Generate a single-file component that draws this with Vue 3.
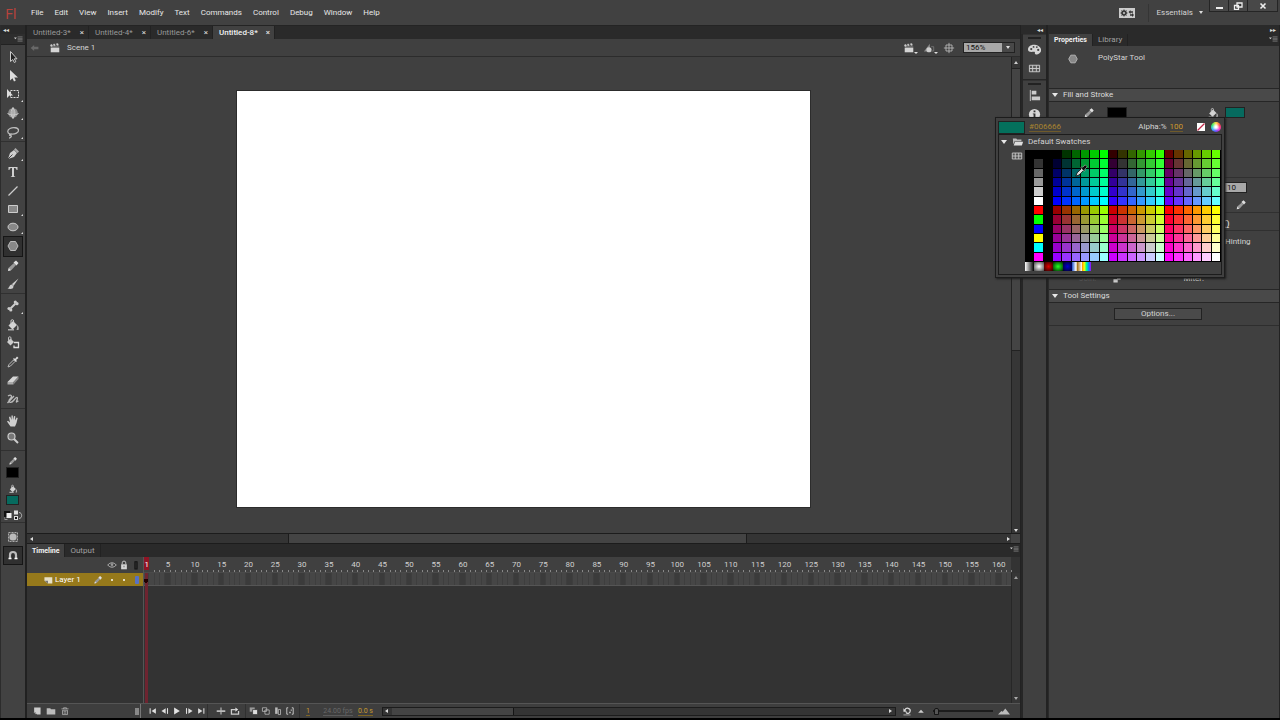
<script setup>
import { ref } from 'vue'

const menus = ['File', 'Edit', 'View', 'Insert', 'Modify', 'Text', 'Commands', 'Control', 'Debug', 'Window', 'Help']
const docs = ['Untitled-3*', 'Untitled-4*', 'Untitled-6*', 'Untitled-8*']
const activeDoc = ref('Untitled-8*')
const activeTool = ref('polystar')
const zoomLevel = ref('156%')
const strokeHeight = ref('10')
const timelineZoom = ref(2)

const toolGroups = [
  { cls: 'g1', tools: [['select', 0], ['subselect', 0], ['transform', 1], ['rotate3d', 1], ['lasso', 1]] },
  { cls: 'g2', tools: [['pen', 1], ['text', 0], ['line', 0], ['rect', 1], ['oval', 1], ['polystar', 0], ['pencil', 0], ['brush', 0]] },
  { cls: 'g3', tools: [['bone', 1], ['bucket', 0], ['ink', 0], ['dropper', 0], ['eraser', 0], ['width', 0]] },
  { cls: 'g4', tools: [['hand', 0], ['zoom', 0]] }
]

const frames = Array.from({ length: 162 }, (_, i) => i + 1)
const label = n => (n === 1 || (n % 5 === 0 && n <= 160) ? n : '')

const greys = ['#000', '#333', '#666', '#999', '#ccc', '#fff', '#f00', '#0f0', '#00f', '#ff0', '#0ff', '#f0f']
const swatches = []
for (let r = 0; r < 12; r++) {
  for (let c = 0; c < 21; c++) {
    if (c === 1) swatches.push(greys[r])
    else if (c < 3) swatches.push('#000')
    else {
      const k = c - 3
      const red = 51 * (Math.floor(k / 6) + (r > 5 ? 3 : 0))
      swatches.push(`rgb(${red},${51 * (k % 6)},${51 * (r % 6)})`)
    }
  }
}

const bucket = '<path d="M2.500 7.500L7 3l4 4-4.500 4.500z" fill="#d4d4d4"/><path d="M5 6V3a1.300 1.300 0 0 1 2.600 0v3" fill="none" stroke="#ccc"/><path d="M11 7c2 1 2 3 1.500 5h-2c1-2 .5-3.500.5-5zM2 11h6v1.500H2z" fill="#aaa"/>'
const icons = {
  select: '<path d="M4.500 1.500v10l2.300-2 1.500 3 1.500-.8-1.500-2.900h2.700z" fill="#222" stroke="#ccc"/>',
  subselect: '<path d="M4 1v10.500l2.500-2.200 1.500 3.200 1.800-.9-1.500-3H12z" fill="#ddd"/>',
  transform: '<path d="M1 2v9l2.500-2.500H7z" fill="#ddd"/><path d="M4.500 3.500h8v7h-8z" fill="none" stroke="#ddd" stroke-dasharray="2 1"/>',
  rotate3d: '<circle cx="7" cy="7" r="4.800" fill="#909090"/><path d="M7 1v12M1.500 7.500c3 2 8 2 11 0M7 2C4.500 4 4.500 10 7 12M7 2c2.500 3 2.500 7 0 10" fill="none" stroke="#ccc"/>',
  lasso: '<path d="M4 9C1 8 1 5 4 3.500s8-1 8.500 1.500S9 9.500 5 9c-2 0-2 2 0 1.500 1 1-.5 2.500-2 2.500" fill="none" stroke="#bbb" stroke-width="1.300"/>',
  pen: '<path d="M2 12l2-6 4-3 3 3-3 4z" fill="#d0d0d0"/><path d="M8 2.500L9.500 1l3.500 3.500L11.500 6z" fill="#aaa"/><path d="M2 12l4.500-4.500" stroke="#444"/>',
  text: '<path d="M2.500 2h9v3h-1c0-1.200-.5-2-2-2H8v8l1.500 1H4.500L6 11V3h-.5c-1.500 0-2 .8-2 2h-1z" fill="#d0d0d0"/>',
  line: '<path d="M2.500 11.500l9-9" stroke="#ccc" stroke-width="1.300"/>',
  rect: '<path d="M2.500 3.500h9v7h-9z" fill="#888" stroke="#ccc"/>',
  oval: '<ellipse cx="7" cy="7" rx="5" ry="3.800" fill="#888" stroke="#ccc"/>',
  polystar: '<path d="M4.500 2.500h5L12 7l-2.500 4.500h-5L2 7z" fill="#888" stroke="#bbb"/>',
  pencil: '<path d="M2 12l1-3.500L8 4l2 2-4.500 5z" fill="#999"/><path d="M7.500 3.500L10 1.500 12.500 4l-2 2.500zM2 12l.7-3 2.300 2.300z" fill="#e0e0e0"/>',
  brush: '<path d="M12.500 1.500L6 7l1.500 2zM6 7.500c-3 0-2 3-4.500 4 3 1 6 .5 6-2z" fill="#ccc"/>',
  bone: '<path d="M4.500 9.500l5-5" stroke="#ccc" stroke-width="2"/><circle cx="3" cy="9.500" r="1.600" fill="#ccc"/><circle cx="4.800" cy="11" r="1.600" fill="#ccc"/><circle cx="9.300" cy="3" r="1.600" fill="#ccc"/><circle cx="11" cy="4.700" r="1.600" fill="#ccc"/>',
  bucket,
  ink: '<path d="M1 6l3.500-3.500L8 6 4.500 9.500z" fill="#ccc"/><path d="M2.500 5V2a1 1 0 0 1 2.500 0v3" fill="none" stroke="#bbb"/><path d="M8 6.500h4.500v5H8V9.500" fill="none" stroke="#ddd" stroke-width="1.300"/>',
  dropper: '<path d="M2 12l1-2.500L7.500 5 9 6.500 4.500 11z" fill="none" stroke="#bbb"/><path d="M7 4l1-1 1 1 2-2.500 1.500 1.500L10 5l1 1-1 1z" fill="#ddd"/>',
  eraser: '<path d="M1.500 9L7 3.500h5.500L7.500 9z" fill="#d6d6d6"/><path d="M1.500 9h6v2.500h-6z" fill="#aaa"/><path d="M7.500 9l5-5.500V6l-5 5.500z" fill="#888"/>',
  width: '<path d="M2 4c3-2 5 0 2 3s1 5 4 1 4-3 3 0-1 2 1.500 1M1.500 11L8 4" fill="none" stroke="#bbb" stroke-width="1.300"/>',
  hand: '<path d="M4.500 12.500L1 7.500l1-.8 2 1.800L3 3l1.200-.4L5.500 6V1.500h1.300L7 6l1-4 1.300.3L9 6.500l1.700-3 1 .5-1.200 5-1.500 3.500z" fill="#d0d0d0"/>',
  zoom: '<circle cx="5.500" cy="5.500" r="3.500" fill="#777" stroke="#ccc" stroke-width="1.200"/><path d="M8 8l4 4" stroke="#ccc" stroke-width="2"/>',
  swap: '<path d="M1 2h6v6H1z" fill="#111"/><path d="M3.500 4h5v5h-5z" fill="#eee"/><path d="M1.500 9.500v-1M1.500 10.500h3" fill="none" stroke="#999"/><path d="M11 1.500h4v4h-4zM11 7h4v4h-4z" fill="#ddd"/><path d="M12 8h2v2h-2z" fill="#111"/><path d="M16 3.500c3.500 0 3.500 6 0 6" fill="none" stroke="#bbb"/>',
  objdraw: '<path d="M2.500 2.500h9v9h-9z" fill="#555" stroke="#aaa" stroke-dasharray="2 1"/><circle cx="7" cy="7" r="3.600" fill="#bbb"/>',
  magnet: '<path d="M4 10.500V7a3 3 0 0 1 6 0v3.500" fill="none" stroke="#bbb" stroke-width="2.200"/><path d="M2.500 10.500h3M8.500 10.500h3" stroke="#fff" stroke-width="1.500"/>',
  clap: '<path d="M2 6.500h10V12H2z" fill="#d4d4d4"/><path d="M1.500 3.500l1.800-.8 1 2-2 .8zM5 2.500l1.600-.3.8 2-1.800.4zM8.500 2l2-.2.5 2-1.800.2zM3 5.500h9" fill="#ccc" stroke="#ccc" stroke-width=".4"/>',
  back: '<path d="M2 7l4-3.500v2h5v3H6v2z" fill="#686868"/>',
  symbols: '<path d="M1 11l7-9v9z" fill="#888"/><circle cx="7" cy="9" r="3" fill="#ccc"/><path d="M9.500 5.500h3v5h-3" fill="none" stroke="#777"/>',
  center: '<path d="M7 1v12M1 7h12M3.500 3.500h7v7h-7z" fill="none" stroke="#bbb"/>',
  palette: '<path d="M0 7c0-3 3-5.500 7.500-5S15 6 14 9s-4.500 4-6 3 .5-2.500-1.500-2.500S0 10.500 0 7z" fill="#d6d6d6"/><circle cx="3.500" cy="6.500" r="1.200" fill="#444"/><circle cx="6" cy="4.200" r="1" fill="#444"/><circle cx="9.500" cy="4.400" r="1" fill="#444"/><circle cx="11" cy="7.500" r="1.200" fill="#444"/>',
  gridic: '<path d="M1.500 3.500h11v7h-11zM1.500 7h11M5 3.500v7M9 3.500v7" fill="#555" stroke="#ccc"/>',
  align: '<path d="M2.500 1v12" stroke="#ccc"/><path d="M4 2h5v4H4zM4 8h9v4H4z" fill="#ccc"/>',
  info: '<circle cx="7" cy="7" r="6" fill="#d8d8d8"/><path d="M6 2.800h2v1.700H6zM5.200 5.800H8v4h1v1H5.200v-1H6V6.700h-.8z" fill="#333"/>',
  folder: '<path d="M1 3h4l1 1.200h5V6H3L1.500 10z" fill="#bbb"/><path d="M3.500 6.700H13L11.500 11H2z" fill="#ddd"/>',
  eye: '<path d="M1 7c3-4 9-4 12 0-3 4-9 4-12 0z" fill="none" stroke="#bbb" stroke-width="1.300"/><circle cx="7" cy="6.500" r="1.800" fill="#999"/>',
  lock: '<path d="M3 6h8v7H3z" fill="#d4d4d4"/><path d="M4.500 6V4a2.500 2.500 0 0 1 5 0v2" fill="none" stroke="#ccc" stroke-width="1.300"/><path d="M6.500 8h1v2h-1z" fill="#444"/>',
  outline: '<path d="M5.500 2.500h3v10h-3z" fill="#333" stroke="#111" stroke-width="1.500"/>',
  page: '<path d="M2 3h11v9H7L2 8z" fill="#e6e0c8"/><path d="M2 8h5v4z" fill="#777"/>',
  newlayer: '<path d="M3 2h9v10H7L3 8z" fill="#ccc"/><path d="M2 8.500h3.500V12z" fill="#999"/>',
  newfolder: '<path d="M1 3h5l1 1.500h6V12H1z" fill="#bbb"/>',
  trash: '<path d="M3.500 6h7v6h-7zM2 4h10M5 4V2.500h4V4M5 8h4M5 10h4" fill="none" stroke="#bbb"/>',
  first: '<path d="M3 3v8" stroke="#ddd" stroke-width="1.500"/><path d="M11 3v8L5 7z" fill="#ddd"/>',
  prev: '<path d="M8 3v8L2 7z" fill="#ddd"/><path d="M10.500 3v8" stroke="#ddd" stroke-width="1.500"/>',
  play: '<path d="M3 2v10l8-5z" fill="#e4e4e4"/>',
  next: '<path d="M3.500 3v8" stroke="#ddd" stroke-width="1.500"/><path d="M6 3v8l6-4z" fill="#ddd"/>',
  last: '<path d="M3 3v8l6-4z" fill="#ddd"/><path d="M11 3v8" stroke="#ddd" stroke-width="1.500"/>',
  centerframe: '<path d="M1 6h12v2.500H1zM6.200 2h1.600v10H6.200z" fill="#bbb"/>',
  loop: '<path d="M2 6v5.500h10V7M2 11.500V5h6" fill="none" stroke="#ccc" stroke-width="1.800"/><path d="M7.500 2l4 3-4 3z" fill="#ddd"/>',
  onion: '<path d="M1 2h7v6H1z" fill="#999"/><path d="M5 5h7v7H5z" fill="#ddd" stroke="#333"/>',
  onionout: '<path d="M2 2.500h6v5H2zM5.500 5.500h6v6h-6z" fill="#333" stroke="#ccc"/>',
  multi: '<path d="M3 2h3.500v9H3z" fill="#bbb"/><path d="M7.500 5h3v7h-3z" fill="#333" stroke="#ccc"/>',
  markers: '<path d="M4.500 2.500h-2v9h2M9.500 2.500h2v9h-2" fill="none" stroke="#ccc" stroke-width="1.300"/><path d="M6 8h2v2H6zM8 5h1.500v1.500H8z" fill="#ccc"/>',
  undo: '<path d="M4 5.500C6 1.500 12 3 11.500 7S7 11 5.500 9" fill="none" stroke="#ddd" stroke-width="1.700"/><path d="M2 3v5h5z" fill="#ddd"/><path d="M2 12.500h10" stroke="#ccc"/>',
  hill: '<path d="M2 10l5-5 5 5z" fill="#ccc"/>',
  hills: '<path d="M0 11l4-4 1.500 1L8.500 4 14 11z" fill="#bbb"/>',
  picker: '<path d="M1 15l1.500-4L8 5.500 10.500 8 5 13.500z" fill="#ddd" stroke="#111"/><path d="M7 4.500L8.500 3.500l1 .5L12.500 1 15 3.500 12 6.500l.5 1-1 1.500z" fill="#0a0a0a" stroke="#ddd" stroke-width=".6"/>',
  ws: '<path d="M1 0h16v10H1z" fill="#ccc"/><circle cx="6" cy="5" r="2" fill="none" stroke="#333" stroke-width="1.500"/><path d="M6 1.500v7M2.500 5h7M3.500 2.500l5 5M8.500 2.500l-5 5" stroke="#333" stroke-width=".9"/><circle cx="6" cy="5" r="1" fill="#ccc"/><path d="M10.500 4l2-2v1.300H15v1.400h-2.500V6zM16 7l-2 2V7.700h-2V6.300h2V5z" fill="#333"/>',
  panelmenu: '<path d="M0 5h4L2 7.500z" fill="#ccc"/><path d="M5 4h7M5 6h7M5 8h7M5 10h7" stroke="#888"/>'
}
const transport = ['first', 'prev', 'play', 'next', 'last']
</script>

<template>
  <div class="app">
    <header class="menubar">
      <span class="logo">Fl</span>
      <nav class="menus"><button v-for="m in menus" :key="m">{{ m }}</button></nav>
      <button class="wsicon" aria-label="Sync settings"><svg viewBox="0 0 18 10" v-html="icons.ws" /></button>
      <button class="workspace">Essentials <i class="down" /></button>
      <div class="winctl">
        <button aria-label="Minimize"><svg viewBox="0 0 10 8"><path d="M2 6h7" stroke="#eee" stroke-width="2" /></svg></button>
        <button aria-label="Restore"><svg viewBox="0 0 10 8"><path d="M4 1h5v4H4zM1.500 3.500h4v4h-4z" fill="#333" stroke="#eee" stroke-width="1.300" /></svg></button>
        <button aria-label="Close" class="close"><svg viewBox="0 0 10 8"><path d="M2.500 1.500l5 5M7.500 1.500l-5 5" stroke="#eee" stroke-width="1.600" /></svg></button>
      </div>
    </header>

    <div class="body">
      <aside class="tools">
        <div class="colhead">◂◂</div>
        <div class="toolhead"><svg viewBox="0 0 14 14" class="i10" v-html="icons.panelmenu" /></div>
        <div v-for="g in toolGroups" :key="g.cls" class="group" :class="g.cls">
          <button v-for="[t, more] in g.tools" :key="t" class="tool" :class="{ on: activeTool === t, more }" :aria-label="t" @click="activeTool = t">
            <svg viewBox="0 0 14 14" v-html="icons[t]" />
          </button>
        </div>
        <div class="group colors">
          <svg viewBox="0 0 14 14" class="i10" v-html="icons.pencil" />
          <button class="chip black" aria-label="Stroke color" />
          <svg viewBox="0 0 14 14" class="i10 fillic" v-html="icons.bucket" />
          <button class="chip" aria-label="Fill color" />
          <svg viewBox="0 0 20 13" class="swap" v-html="icons.swap" />
        </div>
        <div class="group opts">
          <button class="tool" aria-label="Object drawing"><svg viewBox="0 0 14 14" v-html="icons.objdraw" /></button>
          <button class="tool on" aria-label="Snap"><svg viewBox="0 0 14 14" v-html="icons.magnet" /></button>
        </div>
      </aside>

      <main class="center">
        <div class="doctabs">
          <div v-for="d in docs" :key="d" class="doctab" :class="{ on: d === activeDoc }">
            <button @click="activeDoc = d">{{ d }}</button><button class="x" aria-label="Close tab">×</button>
          </div>
        </div>
        <div class="editbar">
          <svg viewBox="0 0 14 14" class="i12" v-html="icons.back" />
          <svg viewBox="0 0 14 14" class="i12 scene" v-html="icons.clap" />
          <span>Scene 1</span>
          <div class="editright">
            <button class="dd" aria-label="Edit scene"><svg viewBox="0 0 14 14" class="i12" v-html="icons.clap" /></button>
            <button class="dd" aria-label="Edit symbols"><svg viewBox="0 0 14 14" class="i12" v-html="icons.symbols" /></button>
            <button aria-label="Center stage"><svg viewBox="0 0 14 14" class="i12" v-html="icons.center" /></button>
            <div class="zoom"><input v-model="zoomLevel" aria-label="Zoom"><button aria-label="Zoom levels"><i class="down" /></button></div>
          </div>
        </div>
        <div class="stagewrap">
          <div class="stage"><div class="canvas" /></div>
          <div class="vbar"><i class="up" /><div class="vthumb" /><i class="down" /></div>
        </div>
        <div class="hbar"><i class="left" /><div class="track"><div class="hthumb" /></div><i class="right" /><span class="corner" /></div>

        <section class="timeline">
          <div class="tltabs"><button class="on">Timeline</button><button>Output</button><svg viewBox="0 0 14 14" class="i10 end" v-html="icons.panelmenu" /></div>
          <div class="tlmain">
            <div class="layers">
              <div class="lhead">
                <svg viewBox="0 0 14 14" class="i10" v-html="icons.eye" />
                <svg viewBox="0 0 14 14" class="i10" v-html="icons.lock" />
                <svg viewBox="0 0 14 14" class="i10" v-html="icons.outline" />
              </div>
              <div class="layer">
                <svg viewBox="0 0 14 14" class="i10" v-html="icons.page" />
                <span class="lname">Layer 1</span>
                <svg viewBox="0 0 14 14" class="i10 lpen" v-html="icons.pencil" />
                <span class="dot" /><span class="dot" /><span class="bluebox" />
              </div>
            </div>
            <div class="frames">
              <div class="playhead" />
              <div class="ruler"><span v-for="n in frames" :key="n" :class="{ cur: n === 1 }">{{ label(n) }}</span></div>
              <div class="cells"><span v-for="n in frames" :key="n" :class="{ fifth: n % 5 === 0, key: n === 1 }" /></div>
            </div>
            <div class="tlbar"><i class="up" /><i class="down" /></div>
          </div>
          <div class="tlfoot">
            <div class="lbtns">
              <button aria-label="New layer"><svg viewBox="0 0 14 14" class="i10" v-html="icons.newlayer" /></button>
              <button aria-label="New folder"><svg viewBox="0 0 14 14" class="i10" v-html="icons.newfolder" /></button>
              <button aria-label="Delete"><svg viewBox="0 0 14 14" class="i10" v-html="icons.trash" /></button>
              <span class="grip" />
            </div>
            <div class="tp">
              <button v-for="t in transport" :key="t" :aria-label="t"><svg viewBox="0 0 14 14" class="i10" v-html="icons[t]" /></button>
            </div>
            <div class="tp two">
              <button aria-label="Center frame"><svg viewBox="0 0 14 14" class="i10" v-html="icons.centerframe" /></button>
              <button aria-label="Loop"><svg viewBox="0 0 14 14" class="i10" v-html="icons.loop" /></button>
            </div>
            <div class="tp four">
              <button v-for="t in ['onion', 'onionout', 'multi', 'markers']" :key="t" :aria-label="t"><svg viewBox="0 0 14 14" class="i10" v-html="icons[t]" /></button>
            </div>
            <div class="nums"><span class="num">1</span><span class="num dim">24.00 fps</span><span class="num">0.0 s</span></div>
            <div class="fbar"><i class="left" /><div class="fthumb" /><i class="right" /></div>
            <button class="reset" aria-label="Reset timeline zoom"><svg viewBox="0 0 14 14" class="i10" v-html="icons.undo" /></button>
            <svg viewBox="0 0 14 14" class="i8" v-html="icons.hill" />
            <input v-model="timelineZoom" type="range" min="0" max="100" aria-label="Timeline zoom">
            <svg viewBox="0 0 14 14" class="i12" v-html="icons.hills" />
          </div>
        </section>
      </main>

      <aside class="dock">
        <div class="colhead r">◂◂</div>
        <div class="dgroup">
          <button aria-label="Color"><svg viewBox="0 0 14 14" v-html="icons.palette" /></button>
          <button aria-label="Swatches"><svg viewBox="0 0 14 14" v-html="icons.gridic" /></button>
        </div>
        <div class="dgroup last">
          <button aria-label="Align"><svg viewBox="0 0 14 14" v-html="icons.align" /></button>
          <button aria-label="Info"><svg viewBox="0 0 14 14" v-html="icons.info" /></button>
        </div>
      </aside>

      <aside class="props">
        <div class="colhead r">▸▸</div>
        <div class="ptabs"><button class="on">Properties</button><button>Library</button><svg viewBox="0 0 14 14" class="i10 end" v-html="icons.panelmenu" /></div>
        <div class="toolinfo"><svg viewBox="0 0 14 14" v-html="icons.polystar" /><span>PolyStar Tool</span></div>
        <h2><i class="tri" />Fill and Stroke</h2>
        <div class="fs">
          <div class="fsrow c">
            <svg viewBox="0 0 14 14" class="i12" v-html="icons.pencil" /><button class="sw black" aria-label="Stroke" />
            <svg viewBox="0 0 14 14" class="i12 b" v-html="icons.bucket" /><button class="sw" aria-label="Fill" />
          </div>
          <div class="fsrow s">
            <input v-model="strokeHeight" aria-label="Stroke height">
            <svg viewBox="0 0 14 14" class="i12" v-html="icons.pencil" />
          </div>
          <div class="fsrow o"><span>Ω</span></div>
          <div class="fsrow h"><span>Hinting</span></div>
          <div class="fsrow j"><span class="faint">Join:</span><svg viewBox="0 0 14 14" class="i10"><path d="M2 12V7h5V3h5v5H8v4z" fill="#ccc" /></svg><span class="miter">Miter:</span></div>
        </div>
        <h2><i class="tri" />Tool Settings</h2>
        <div class="ts"><button>Options...</button></div>
      </aside>
    </div>

    <div class="popup" role="dialog" aria-label="Color picker">
      <div class="ptop">
        <span class="cur" /><span class="hex">#006666</span>
        <span class="alpha">Alpha:%</span><span class="hex a">100</span>
        <button class="none" aria-label="No color"><svg viewBox="0 0 10 10"><path d="M1 1h8v8H1z" fill="#fff" /><path d="M1.500 8.500l7-7" stroke="#c02848" stroke-width="1.300" /></svg></button>
        <button class="wheel" aria-label="Color wheel" />
      </div>
      <div class="pbody">
        <div class="pname"><i class="tri" /><svg viewBox="0 0 14 14" class="i12" v-html="icons.folder" /><span>Default Swatches</span></div>
        <div class="pgrid">
          <svg viewBox="0 0 14 14" class="i12" v-html="icons.gridic" />
          <div>
            <div class="sgrid"><span v-for="(c, i) in swatches" :key="i" :style="{ background: c }" /></div>
            <div class="grads"><span v-for="n in 7" :key="n" :class="'gr' + n" /></div>
          </div>
        </div>
        <svg viewBox="0 0 16 16" class="pick" v-html="icons.picker" />
      </div>
    </div>
  </div>
</template>

<style>
html, body { margin: 0; background: #000; }
</style>

<style scoped>
* { box-sizing: border-box; }
.app { position: relative; height: 100vh; display: flex; flex-direction: column; background: #404040; border-bottom: 2px solid #000; color: #d4d4d4; font: 8px/10px Roboto, "Liberation Sans", sans-serif; overflow: hidden; }
button, input { font: inherit; color: inherit; background: none; border: 0; padding: 0; margin: 0; border-radius: 0; }
button { display: flex; align-items: center; justify-content: center; white-space: nowrap; }
span { white-space: nowrap; }
svg { display: block; flex: none; }
.i8 { width: 8px; height: 8px; }
.i10 { width: 10px; height: 10px; }
.i12 { width: 12px; height: 12px; }
.end { margin-left: auto; }
.down, .up, .tri { width: 0; height: 0; border: 3px solid transparent; flex: none; }
.down { border-width: 3px 2px 0; border-top-color: #ddd; }
.up { border-width: 0 2px 3px; border-bottom-color: #ccc; }
.left { border: solid transparent; border-width: 2px 3px 2px 0; border-right-color: #ddd; }
.right { border: solid transparent; border-width: 2px 0 2px 3px; border-left-color: #ddd; }
.tri { border-width: 4px 3px 0; border-top-color: #e8e8e8; }

.menubar { flex: none; height: 25px; display: flex; align-items: center; background: #414141; }
.logo { width: 31px; padding-left: 5px; font: 15px/22px "Open Sans", sans-serif; color: #b8423c; }
.menus { display: flex; gap: 11px; color: #e8e8e8; }
.wsicon { margin-left: auto; }
.wsicon svg { width: 18px; height: 10px; }
.workspace { gap: 6px; margin-left: 12px; padding-left: 8px; height: 18px; border-left: 1px solid #353535; }
.winctl { align-self: flex-start; display: flex; margin: 0 2px 0 6px; height: 12px; border: 1px solid #252525; border-top: 0; background: #484848; }
.winctl button { width: 19px; border-right: 1px solid #252525; }
.winctl .close { width: 29px; border-right: 0; }
.winctl svg { width: 10px; height: 8px; }

.body { flex: 1; min-height: 0; display: grid; grid-template-columns: 27px minmax(0, 1fr) 27px 232px; }
.colhead { height: 9px; background: #2a2a2a; color: #ddd; font: 6px/9px "DejaVu Sans", sans-serif; padding-left: 2px; }
.colhead.r { text-align: right; padding-right: 3px; }

.tools { border-right: 2px solid #212121; border-left: 1px solid #2c2c2c; background: #424242; }
.toolhead { height: 11px; background: #2e2e2e; display: flex; justify-content: flex-end; padding-right: 1px; border-bottom: 1px solid #222; }
.group { display: flex; flex-direction: column; align-items: center; border-bottom: 1px solid #303030; padding: 3px 1px 0 0; }
.g1 { height: 97px; }
.g2 { height: 152px; }
.g3 { height: 115px; }
.g4 { height: 42px; padding-bottom: 3px; }
.tool { position: relative; flex: 1; width: 20px; }
.tool svg { width: 14px; height: 14px; }
.tool.more::after { content: ""; position: absolute; right: 0; bottom: 2px; border: solid transparent; border-width: 0 0 2px 2px; border-bottom-color: #ddd; }
.tool.on { background: #303030; border: 1px solid #161616; }
.colors { height: 72px; padding-top: 5px; }
.chip { width: 13px; height: 11px; background: #066a5e; border: 1px solid #222; margin-top: 1px; }
.fillic { margin-top: 6px; }
.swap { width: 20px; height: 13px; margin-top: 4px; }
.opts { height: 42px; padding-top: 5px; border: 0; }

.center { display: flex; flex-direction: column; min-width: 0; background: #404040; border-right: 1px solid #222; }
.doctabs { height: 14px; flex: none; display: flex; background: #2a2a2a; border-top: 1px solid #242424; }
.doctab { display: flex; align-items: center; justify-content: space-between; width: 62px; padding: 0 4px 0 6px; color: #999; border-right: 1px solid #222; }
.doctab .x { color: #ddd; }
.doctab.on { background: #414141; color: #f0f0f0; }
.doctab.on button { font-weight: 500; }
.editbar { height: 18px; flex: none; display: flex; align-items: center; padding: 0 5px 0 2px; border-bottom: 1px solid #2c2c2c; }
.scene { margin: 0 6px 0 8px; }
.editright { margin-left: auto; display: flex; align-items: center; gap: 8px; }
.dd { position: relative; }
.dd::after { content: ""; position: absolute; right: -3px; bottom: 0; border: 2px solid transparent; border-top-color: #ddd; border-bottom: 0; }
.zoom { display: flex; height: 11px; border: 1px solid #222; }
.zoom input { width: 38px; background: #a8a8a8; color: #111; padding-left: 2px; }
.zoom button { width: 12px; background: #484848; }
.stagewrap { flex: 1; min-height: 0; display: flex; }
.stage { flex: 1; min-width: 0; display: flex; align-items: center; justify-content: center; padding: 7px 0 0 9px; overflow: hidden; }
.canvas { width: 575px; height: 418px; background: #fff; border: 1px solid #2c2c2c; flex: none; }
.vbar { width: 9px; background: #363636; border-left: 1px solid #222; display: flex; flex-direction: column; align-items: center; padding: 4px 0 1px; }
.vthumb { width: 8px; height: 60%; margin: 4px 0 auto; background: #444; border: solid #222; border-width: 1px 0; }
.hbar { height: 11px; flex: none; display: flex; align-items: center; background: #343434; border: solid #1c1c1c; border-width: 1px 0; padding-left: 3px; }
.track { flex: 1; height: 9px; margin: 0 4px; }
.hthumb { margin-left: 26%; width: 47.5%; height: 9px; background: #444; border: solid #1c1c1c; border-width: 0 1px; }
.corner { width: 9px; height: 9px; background: #444; margin-left: 1px; }

.timeline { flex: none; height: 174px; display: flex; flex-direction: column; }
.tltabs, .ptabs { flex: none; height: 12px; display: flex; background: #2a2a2a; }
.tltabs { height: 13px; }
.tltabs button, .ptabs button { padding: 0 5px; color: #a0a0a0; border-right: 1px solid #222; }
.tltabs button.on, .ptabs button.on { background: #414141; color: #f2f2f2; font-size: 7px; font-weight: 700; }
.tlmain { flex: 1; min-height: 0; display: grid; grid-template-columns: 117px minmax(0, 1fr) 9px; background: #333; }
.layers { border-right: 1px solid #555; }
.lhead { height: 16px; background: #404040; display: flex; align-items: center; justify-content: flex-end; gap: 2px; padding-right: 2px; }
.layer { height: 13px; background: #96791b; display: flex; align-items: center; padding: 0 4px 0 16px; color: #fff; }
.lname { margin-left: 2px; }
.lpen { margin: 0 8px 0 auto; }
.dot { width: 2px; height: 2px; background: #fff; margin-right: 10px; border-radius: 1px; }
.bluebox { width: 4px; height: 8px; background: #5872c4; border-radius: 1px; }
.frames { position: relative; min-width: 0; }
.playhead { position: absolute; left: 1px; top: 16px; bottom: 0; width: 3px; background: #6e2430; z-index: 1; }
.ruler { display: flex; height: 16px; background: #404040; border-bottom: 1px solid #4a4a4a; }
.ruler span { flex: 1 1 0; width: 0; display: flex; justify-content: center; padding-top: 3px; color: #d0d0d0; background: linear-gradient(#888, #888) right bottom / 1px 2px no-repeat; }
.ruler .cur { background: #8f1425; color: #fff; }
.cells { display: flex; height: 13px; background: #464646; border-bottom: 1px solid #555; }
.cells span { flex: 1 1 0; border-right: 1px solid #3e3e3e; }
.cells .fifth { background: #3b3b3b; }
.cells .key { z-index: 2; background: radial-gradient(circle at 50% 65%, #200 2px, transparent 2px); }
.tlbar { margin-top: 16px; background: #383838; border-left: 1px solid #222; display: flex; flex-direction: column; justify-content: space-between; align-items: center; padding: 3px 0; opacity: .7; }
.tlfoot { flex: none; height: 15px; display: flex; align-items: center; background: #3e3e3e; border-top: 1px solid #555; }
.lbtns { width: 114px; height: 100%; display: flex; align-items: center; gap: 4px; padding-left: 5px; border-right: 1px solid #777; }
.grip { margin: 0 1px 0 auto; width: 4px; height: 7px; background: #888; }
.tp { display: flex; align-items: center; gap: 2px; height: 100%; padding: 0 1px 0 7px; border-right: 1px solid #303030; }
.tp.two { padding: 0 5px 0 8px; gap: 4px; }
.tp.four { padding: 0 4px 0 3px; }
.nums { width: 82px; display: flex; justify-content: space-between; padding: 0 9px 0 6px; font-size: 7px; }
.num { color: #c79a2e; border-bottom: 1px solid #7d6422; line-height: 8px; }
.num.dim { color: #686868; border-color: #5a5a5a; margin-left: 8px; }
.fbar { flex: 1; height: 9px; display: flex; align-items: center; background: #343434; border: 1px solid #1c1c1c; padding: 0 3px 0 2px; }
.fthumb { width: 24%; height: 7px; margin: 0 auto 0 4px; background: #444; border-right: 1px solid #151515; }
.reset { margin: 0 5px 0 6px; }
.tlfoot input { appearance: none; width: 60px; height: 8px; margin: 0 5px 0 8px; background: linear-gradient(#1c1c1c, #1c1c1c) center / 100% 2px no-repeat; }
.tlfoot input::-webkit-slider-thumb { appearance: none; width: 5px; height: 7px; background: #555; border: 1px solid #151515; border-radius: 2px 2px 0 0; }
.tlfoot > .i12 { margin-right: 10px; }

.dock { background: #262626; border-right: 2px solid #222; }
.dgroup { margin-left: 2px; background: #404040; display: flex; flex-direction: column; align-items: center; height: 45px; margin-bottom: 1px; border-top: 1px solid #333; }
.dgroup::before { content: ""; width: 13px; height: 2px; margin: 2px 0 1px; background: #222; }
.dgroup button { height: 19px; }
.dgroup svg { width: 13px; height: 13px; }
.dgroup.last { height: calc(100% - 55px); margin: 0 0 0 2px; }

.props { background: #404040; min-width: 0; border-left: 1px solid #2a2a2a; border-right: 1px solid #222; }
.toolinfo { height: 42px; display: flex; align-items: flex-start; padding: 7px 0 0 18px; gap: 19px; }
.toolinfo svg { width: 12px; height: 12px; }
.props h2 { height: 14px; margin: 0; display: flex; align-items: center; gap: 5px; padding-left: 3px; font: inherit; color: #dcdcdc; background: #494949; border: solid #262626; border-width: 1px 0; }
.fs { height: 187px; display: flex; flex-direction: column; overflow: hidden; }
.fsrow { display: flex; align-items: center; border-bottom: 1px solid #303030; flex: none; }
.fsrow.c { height: 76px; align-items: flex-start; padding: 5px 0 0 34px; }
.sw { width: 20px; height: 11px; background: #066a5e; border: 1px solid #222; margin-left: 12px; }
.sw.black, .chip.black { background: #000; }
.fsrow .b { margin-left: 80px; }
.fsrow .b + .sw { margin-left: 6px; }
.fsrow.s { height: 35px; flex-direction: column; align-items: flex-end; gap: 6px; padding: 4px 32px 0 0; }
.fsrow.s input { width: 24px; height: 11px; background: #a8a8a8; color: #111; border: 1px solid #222; padding-left: 3px; }
.fsrow.o { height: 18px; padding: 6px 0 0 174px; font-size: 10px; }
.fsrow.h { height: 22px; padding-left: 176px; border: 0; }
.fsrow.j { height: 34px; border: 0; padding: 17px 0 0 30px; }
.faint { color: #5c5c5c; }
.fsrow.j svg { margin: 0 auto 0 16px; }
.miter { margin-right: 75px; }
.ts { height: 23px; display: flex; align-items: center; justify-content: center; padding-right: 12px; border-bottom: 1px solid #2e2e2e; }
.ts button { width: 88px; height: 12px; background: #4a4a4a; border: 1px solid #222; }

.popup { position: absolute; top: 117px; right: 55px; width: 230px; height: 161px; display: flex; flex-direction: column; background: #404040; border: 1px solid #1c1c1c; padding: 2px; box-shadow: 1px 1px 2px #1c1c1c; }
.ptop { height: 14px; display: flex; align-items: center; }
.cur { width: 27px; height: 13px; }
.ptop .cur { background: #04705c; border: 1px solid #222; margin-right: 4px; }
.hex { color: #a88430; border-bottom: 1px solid #6f5a2a; line-height: 9px; }
.alpha { margin: 0 3px 0 auto; }
.a { color: #cf9a2c; margin-right: 13px; }
.none svg { width: 10px; height: 10px; }
.wheel { width: 10px; height: 10px; border-radius: 50%; margin: 0 1px 0 5px; background: radial-gradient(circle, #fff 1px, transparent 4px), conic-gradient(#fd4, #f44, #f3c, #64f, #3bf, #3e6, #fd4); }
.pbody { position: relative; flex: 1; border: 1px solid #1c1c1c; padding: 1px 0 0 1px; }
.pname { display: flex; align-items: center; height: 12px; padding-left: 1px; }
.pname svg { margin: 0 4px 0 5px; }
.pgrid { display: flex; justify-content: space-between; margin-top: 2px; }
.pgrid > svg { margin-left: 11px; }
.sgrid { width: 196px; height: 112px; display: grid; grid-template-columns: repeat(21, 1fr); grid-template-rows: repeat(12, 1fr); background: #000; }
.sgrid span { border: solid #000; border-width: 0 1px 1px 0; }
.grads { width: 66px; height: 9px; display: grid; grid-template-columns: repeat(7, 1fr); }
.gr1 { background: linear-gradient(90deg, #fff, #000); }
.gr2 { background: radial-gradient(#fff, #444); }
.gr3 { background: radial-gradient(#d00, #200); }
.gr4 { background: radial-gradient(#2f2, #020); }
.gr5 { background: radial-gradient(#00c, #002); }
.gr6 { background: linear-gradient(90deg, #25c, #fff 40%, #a72 55%, #fff); }
.gr7 { background: linear-gradient(90deg, #f80, #ff0, #0f8, #08f, #a0f); }
.pick { position: absolute; left: 76px; top: 29px; width: 13px; height: 13px; }
</style>
